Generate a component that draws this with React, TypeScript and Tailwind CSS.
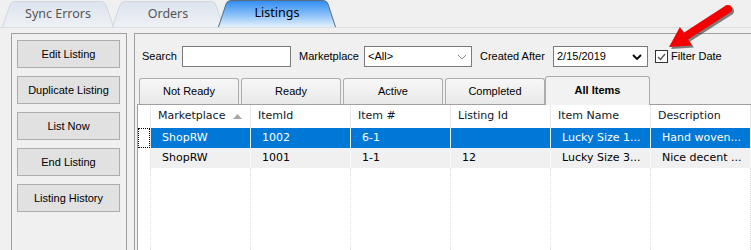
import React from 'react';

const topTabs = [
  { label: 'Sync Errors', w: 'w-[112px] ml-[2px]', active: false },
  { label: 'Orders', w: 'w-[112px] -ml-[2px]', active: false },
  { label: 'Listings', w: 'w-[118px] -ml-[6px]', active: true },
];

const actions = ['Edit Listing', 'Duplicate Listing', 'List Now', 'End Listing', 'Listing History'];
const subTabs = ['Not Ready', 'Ready', 'Active', 'Completed'];
const columns = ['Marketplace', 'ItemId', 'Item #', 'Listing Id', 'Item Name', 'Description'];

const rows = [
  { cells: ['ShopRW', '1002', '6-1', '', 'Lucky Size 1...', 'Hand woven...'], selected: true },
  { cells: ['ShopRW', '1001', '1-1', '12', 'Lucky Size 3...', 'Nice decent ...'], selected: false },
];

function TopTab({ label, w, active }: { label: string; w: string; active: boolean }) {
  const width = active ? 118 : 112;
  const id = active ? 'tabActive' : 'tabIdle';
  return (
    <div className={`relative h-[26px] ${w} ${active ? 'z-10 h-[27px]' : ''} flex items-center justify-center`}>
      <svg className="absolute inset-0" width={width} height={active ? 27 : 26}>
        <defs>
          <linearGradient id={id} x1="0" y1="0" x2="0" y2="1">
            {active ? (
              <>
                <stop offset="0" stopColor="#2f8cf3" />
                <stop offset="0.55" stopColor="#8cc1f8" />
                <stop offset="1" stopColor="#e6f1fd" />
              </>
            ) : (
              <>
                <stop offset="0" stopColor="#dde4ee" />
                <stop offset="1" stopColor="#eef1f5" />
              </>
            )}
          </linearGradient>
        </defs>
        <path
          d={`M0.5,${active ? 27 : 26} L8,4 Q9,0.5 13,0.5 L${width - 13},0.5 Q${width - 9},0.5 ${width - 8},4 L${width - 0.5},${active ? 27 : 26}`}
          fill={`url(#${id})`}
          stroke={active ? '#5b6b80' : '#d0d7e0'}
        />
      </svg>
      <span className={`relative text-[12.5px] ${active ? 'text-black' : 'text-[#555]'} font-['Noto_Sans',sans-serif]`}>
        {label}
      </span>
    </div>
  );
}

function Chevron({ bold }: { bold?: boolean }) {
  return (
    <svg width="10" height="6" viewBox="0 0 10 6">
      <path
        d="M1,1 L5,5 L9,1"
        fill="none"
        stroke={bold ? '#000' : '#888'}
        strokeWidth={bold ? 1.8 : 1}
      />
    </svg>
  );
}

export default function App() {
  return (
    <div className="relative w-[751px] h-[250px] overflow-hidden bg-[#f0f0f0] font-['Liberation_Sans',Arial,sans-serif] text-[11px] text-black">
      {/* top tab strip */}
      <div className="flex items-end h-[28px] pt-[2px] border-b border-[#d8dde4]">
        {topTabs.map((t) => (
          <TopTab key={t.label} {...t} />
        ))}
      </div>

      <div className="flex h-[222px] pt-[5px]">
        {/* left action panel */}
        <div className="ml-[11px] w-[116px] border border-b-0 border-[#a0a0a0] pt-[6px] px-[5px] flex flex-col gap-[8px]">
          {actions.map((a) => (
            <button
              key={a}
              className="h-[28px] w-[103px] bg-[#e1e1e1] border border-[#adadad] text-[11px] text-black"
            >
              {a}
            </button>
          ))}
        </div>

        {/* right panel */}
        <div className="ml-[7px] flex-1 border-l border-t border-[#a0a0a0] flex flex-col">
          <div className="flex items-center h-[21px] mt-[12px] pl-[7px]">
            <span className="w-[40px] whitespace-nowrap">Search</span>
            <div className="w-[109px] h-[21px] bg-white border border-[#7a7a7a]" />
            <span className="ml-[8px] w-[65px] whitespace-nowrap">Marketplace</span>
            <div className="w-[108px] h-[21px] bg-white border border-[#7a7a7a] flex items-center justify-between pl-[3px] pr-[4px]">
              <span>&lt;All&gt;</span>
              <Chevron />
            </div>
            <span className="ml-[8px] w-[73px] whitespace-nowrap">Created After</span>
            <div className="w-[95px] h-[21px] bg-white border border-[#7a7a7a] flex items-center justify-between pl-[3px] pr-[5px]">
              <span>2/15/2019</span>
              <Chevron bold />
            </div>
            <div className="ml-[7px] w-[13px] h-[13px] bg-white border border-[#333] flex items-center justify-center">
              <svg width="9" height="8" viewBox="0 0 9 8">
                <path d="M1,4 L3.5,6.5 L8,1" fill="none" stroke="#555" strokeWidth="1.4" />
              </svg>
            </div>
            <span className="ml-[3px]">Filter Date</span>
          </div>

          {/* sub tabs + grid */}
          <div className="ml-[2px] mt-[9px] flex flex-col flex-1">
            <div className="flex items-end h-[28px] pl-[2px] gap-[2px]">
              {subTabs.map((s) => (
                <div
                  key={s}
                  className="w-[100px] h-[26px] border border-b-0 border-[#acacac] rounded-t-[3px] bg-gradient-to-b from-[#f7f7f7] to-[#e9e9e9] flex items-center justify-center"
                >
                  {s}
                </div>
              ))}
              <div className="relative z-10 -ml-[2px] w-[105px] h-[29px] -mb-[1px] border border-b-0 border-[#acacac] rounded-t-[3px] bg-[#f2f2f2] flex items-center justify-center pb-[2px] font-bold">
                All Items
              </div>
            </div>

            <div className="flex-1 border-l border-t border-[#a0a0a0] bg-white font-['DejaVu_Sans',Verdana,sans-serif] text-[11px] flex flex-col">
              {/* header */}
              <div className="flex h-[23px]">
                <div className="w-[13px] border-r border-[#e8e8e8]" />
                {columns.map((c, i) => (
                  <div key={c} className="w-[100px] border-r border-[#e8e8e8] flex items-center pl-[7px] pr-[8px] justify-between text-[#101828]">
                    <span>{c}</span>
                    {i === 0 && (
                      <svg width="9" height="5" viewBox="0 0 9 5">
                        <path d="M0,5 L4.5,0 L9,5 Z" fill="#a8a8a8" />
                      </svg>
                    )}
                  </div>
                ))}
              </div>
              {/* rows */}
              {rows.map((r, ri) => (
                <div key={ri} className="flex h-[20px]">
                  <div className="w-[13px] border-r border-[#e8e8e8] bg-white flex">
                    {r.selected && <div className="flex-1 border border-dotted border-black" />}
                  </div>
                  {r.cells.map((cell, ci) => (
                    <div
                      key={ci}
                      className={`w-[100px] border-r flex items-center pl-[11px] whitespace-nowrap ${
                        r.selected ? 'bg-[#0078d7] text-white border-[#e8f0f8]' : 'bg-[#f0f0f0] text-black border-[#fafafa]'
                      }`}
                    >
                      {cell}
                    </div>
                  ))}
                </div>
              ))}
              {/* empty area */}
              <div className="flex flex-1">
                <div className="w-[13px] border-r border-dotted border-[#dcdcdc]" />
                {columns.map((c) => (
                  <div key={c} className="w-[100px] border-r border-dotted border-[#dcdcdc]" />
                ))}
              </div>
            </div>
          </div>
        </div>
      </div>

      {/* red arrow callout */}
      <svg className="absolute left-0 top-0 pointer-events-none" width="751" height="250">
        <g transform="translate(2,2)" opacity="0.55">
          <polygon points="730.2,12.4 725.8,5.6 683.7,32.8 679.9,26.9 669,47 691.9,45.5 688.1,39.6" fill="#222" />
          <circle cx="728" cy="9" r="4" fill="#222" />
        </g>
        <polygon points="730.2,12.4 725.8,5.6 683.7,32.8 679.9,26.9 669,47 691.9,45.5 688.1,39.6" fill="#f40000" />
        <circle cx="728" cy="9" r="4" fill="#f40000" />
      </svg>
    </div>
  );
}
